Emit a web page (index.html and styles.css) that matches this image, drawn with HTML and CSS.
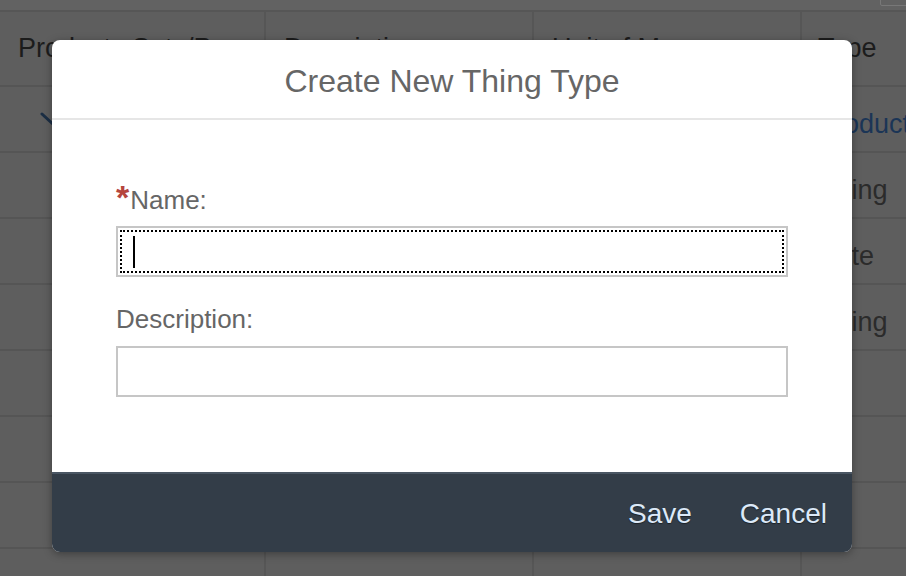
FILE: index.html
```html
<!DOCTYPE html>
<html>
<head>
<meta charset="utf-8">
<link rel="stylesheet" href="styles.css">
</head>
<body>
<div class="page">
  <div class="topbar"><div class="topbtn"></div></div>
  <div class="table">
    <div class="cell head">Products Sets/Pr…</div>
    <div class="cell head">Description</div>
    <div class="cell head">Unit of M…</div>
    <div class="cell head">Type</div>

    <div class="cell"><svg class="chev" width="30" height="16" viewBox="0 0 30 16"><path d="M2 2 L14 13 L26 2" fill="none" stroke="#1b2e44" stroke-width="3" stroke-linecap="round"/></svg></div>
    <div class="cell"></div>
    <div class="cell"></div>
    <div class="cell link">Product</div>

    <div class="cell"></div><div class="cell"></div><div class="cell"></div><div class="cell">String</div>
    <div class="cell"></div><div class="cell"></div><div class="cell"></div><div class="cell">Date</div>
    <div class="cell"></div><div class="cell"></div><div class="cell"></div><div class="cell">String</div>
    <div class="cell"></div><div class="cell"></div><div class="cell"></div><div class="cell"></div>
    <div class="cell"></div><div class="cell"></div><div class="cell"></div><div class="cell"></div>
    <div class="cell"></div><div class="cell"></div><div class="cell"></div><div class="cell"></div>
    <div class="cell"></div><div class="cell"></div><div class="cell"></div><div class="cell"></div>
  </div>
</div>

<div class="modal">
  <div class="modal-head">Create New Thing Type</div>
  <div class="modal-body">
    <div class="label"><span class="req">*</span>Name:</div>
    <div class="field focused"><span class="caret"></span></div>
    <div class="label label-2">Description:</div>
    <div class="field"></div>
  </div>
  <div class="modal-foot">
    <span class="btn">Save</span>
    <span class="btn">Cancel</span>
  </div>
</div>
</body>
</html>
```
FILE: styles.css
```css
html, body {
  margin: 0;
  padding: 0;
}
body {
  width: 906px;
  height: 576px;
  overflow: hidden;
  background: #5e5e5e;
  font-family: "Liberation Sans", Arial, sans-serif;
  position: relative;
}
.page {
  display: flex;
  flex-direction: column;
  height: 576px;
  overflow: hidden;
}
.topbar {
  height: 10px;
  flex: none;
  background: #626262;
  border-bottom: 2px solid #565656;
  position: relative;
}
.topbtn {
  position: absolute;
  right: -4px;
  top: -4px;
  width: 28px;
  height: 8px;
  border: 1px solid #787878;
  border-radius: 2px;
}
.table {
  display: grid;
  grid-template-columns: 264px 268px 268px 1fr;
  grid-template-rows: 75px;
  grid-auto-rows: 66px;
}
.cell {
  box-sizing: border-box;
  border-bottom: 2px solid #555555;
  font-size: 27px;
  color: #2b2b2b;
  padding: 22px 0 0 18px;
  white-space: nowrap;
  overflow: hidden;
}
.cell:nth-child(4n+2), .cell:nth-child(4n+3), .cell:nth-child(4n) {
  border-left: 2px solid #565656;
}
.cell:nth-child(4n) {
  padding-left: 15px;
}
.head {
  padding-top: 21px;
  color: #1c1c1c;
}
.cell.head:nth-child(4) {
  padding-left: 16px;
}
.link {
  color: #1b3556;
}
.chev {
  display: block;
  margin: 3px 0 0 22px;
}

.modal {
  position: absolute;
  left: 52px;
  top: 40px;
  width: 800px;
  height: 512px;
  background: #ffffff;
  border-radius: 8px;
  overflow: hidden;
  box-shadow: 0 2px 8px rgba(0, 0, 0, 0.35);
  display: flex;
  flex-direction: column;
}
.modal-head {
  height: 80px;
  flex: none;
  display: flex;
  align-items: center;
  justify-content: center;
  padding-top: 4px;
  box-sizing: border-box;
  border-bottom: 2px solid #e6e6e6;
  font-size: 32px;
  color: #666666;
}
.modal-body {
  flex: 1;
  padding: 65px 64px 0 64px;
  display: flex;
  flex-direction: column;
}
.label {
  font-size: 26px;
  line-height: 30px;
  height: 30px;
  color: #666666;
  margin-bottom: 11px;
}
.label-2 {
  margin-top: 27px;
  margin-bottom: 12px;
}
.req {
  color: #b5453e;
  font-size: 34px;
  font-weight: bold;
  line-height: 1px;
  margin-right: 1px;
}
.field {
  position: relative;
  box-sizing: border-box;
  width: 672px;
  height: 51px;
  flex: none;
  border: 2px solid #c6c6c6;
  background: #ffffff;
}
.focused {
  outline: 2px dotted #000000;
  outline-offset: -6px;
}
.caret {
  position: absolute;
  left: 15px;
  top: 8px;
  width: 2px;
  height: 32px;
  background: #000000;
}
.modal-foot {
  height: 80px;
  flex: none;
  box-sizing: border-box;
  background: #333d48;
  border-top: 2px solid #4a5663;
  display: flex;
  justify-content: flex-end;
  align-items: center;
  gap: 48px;
  padding: 2px 25px 0 0;
}
.btn {
  font-size: 28px;
  color: #dce9f8;
  text-shadow: 0 1px 1px rgba(0, 0, 0, 0.45);
}
```
